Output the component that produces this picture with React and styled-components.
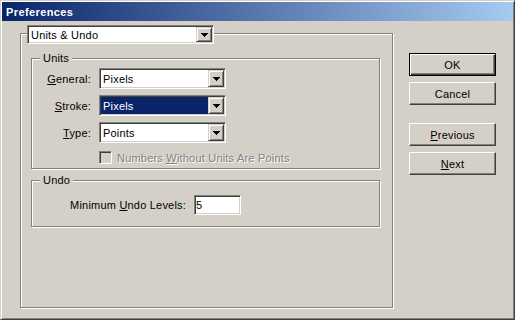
import React from 'react';
import styled, { createGlobalStyle } from 'styled-components';

const Global = createGlobalStyle`
  html, body { margin: 0; padding: 0; background: #d4d0c8; }
  body { font-family: "Liberation Sans", Arial, sans-serif; font-size: 11px; }
`;

const FONT = '"Liberation Sans", Arial, sans-serif';

const Window = styled.div`
  width: 515px;
  height: 320px;
  box-sizing: border-box;
  background: #d4d0c8;
  border: 1px solid;
  border-color: #d4d0c8 #404040 #404040 #d4d0c8;
  box-shadow: inset 1px 1px 0 #fff, inset -1px -1px 0 #808080;
  padding: 1px;
  display: flex;
  flex-direction: column;
  font-family: ${FONT};
  font-size: 11px;
  letter-spacing: 0.2px;
  color: #000;
`;

const TitleBar = styled.div`
  height: 19px;
  flex: none;
  display: flex;
  align-items: center;
  padding-left: 4px;
  background: linear-gradient(to right, #0a246a, #a6caf0);
  color: #fff;
  font-weight: bold;
  letter-spacing: 0.4px;
`;

const Body = styled.div`
  flex: 1;
  display: flex;
  align-items: flex-start;
  gap: 16px;
  padding: 12px 0 0 18px;
`;

const Etched = styled.div`
  box-sizing: border-box;
  border: 1px solid #808080;
  box-shadow: inset 1px 1px 0 #fff, 1px 1px 0 #fff;
  display: flex;
  flex-direction: column;
  align-items: flex-start;
`;

const OuterGroup = styled(Etched)`
  width: 373px;
  height: 275px;
`;

const SubGroup = styled(Etched)`
  width: 349px;
  margin: ${p => p.$top}px 0 0 10px;
  padding-bottom: ${p => p.$bottom}px;
`;

const Legend = styled.div`
  margin: -7px 0 0 8px;
  padding: 0 3px;
  height: 13px;
  line-height: 13px;
  background: #d4d0c8;
  white-space: nowrap;
`;

const Field = styled.div`
  box-sizing: border-box;
  flex: none;
  width: ${p => p.$w}px;
  height: ${p => p.$h}px;
  margin: ${p => p.$margin || '0'};
  border: 1px solid;
  border-color: #808080 #fff #fff #808080;
  box-shadow: inset 1px 1px 0 #404040, inset -1px -1px 0 #d4d0c8;
  background: #fff;
  padding: 1px;
  display: flex;
  position: relative;
`;

const FieldText = styled.div`
  flex: 1;
  display: flex;
  align-items: center;
  padding-left: ${p => p.$pad ?? 2}px;
  background: ${p => (p.$selected ? '#0a246a' : 'transparent')};
  color: ${p => (p.$selected ? '#fff' : '#000')};
  white-space: nowrap;
  overflow: hidden;
`;

const DropButton = styled.div`
  box-sizing: border-box;
  width: 16px;
  flex: none;
  background: #d4d0c8;
  border: 1px solid;
  border-color: #d4d0c8 #404040 #404040 #d4d0c8;
  box-shadow: inset 1px 1px 0 #fff, inset -1px -1px 0 #808080;
  display: flex;
  align-items: center;
  justify-content: center;
  padding-top: 1px;
`;

const Arrow = () => (
  <svg width="7" height="4" viewBox="0 0 7 4" shapeRendering="crispEdges">
    <path d="M0 0h7v1H0zM1 1h5v1H1zM2 2h3v1H2zM3 3h1v1H3z" fill="#000" />
  </svg>
);

const Select = ({ value, w, h, selected, margin }) => (
  <Field $w={w} $h={h} $margin={margin}>
    <FieldText $selected={selected}>{value}</FieldText>
    <DropButton>
      <Arrow />
    </DropButton>
  </Field>
);

const FormGrid = styled.div`
  display: grid;
  grid-template-columns: ${p => p.$cols};
  column-gap: 8px;
  row-gap: 6px;
  align-items: center;
  margin-top: ${p => p.$top}px;
`;

const Label = styled.div`
  text-align: right;
  white-space: nowrap;
`;

const CheckRow = styled.div`
  display: flex;
  align-items: center;
  gap: 5px;
  margin: 8px 0 0 67px;
  height: 13px;
`;

const CheckBox = styled.div`
  box-sizing: border-box;
  width: 13px;
  height: 13px;
  border: 1px solid;
  border-color: #808080 #fff #fff #808080;
  box-shadow: inset 1px 1px 0 #404040, inset -1px -1px 0 #d4d0c8;
  background: #d4d0c8;
`;

const DisabledText = styled.span`
  color: #808080;
  text-shadow: 1px 1px 0 #fff;
  white-space: nowrap;
`;

const ButtonColumn = styled.div`
  display: flex;
  flex-direction: column;
  gap: 18px;
  margin-top: 20px;
`;

const ButtonGroup = styled.div`
  display: flex;
  flex-direction: column;
  gap: 6px;
`;

const Button = styled.div`
  box-sizing: border-box;
  width: 87px;
  height: 23px;
  display: flex;
  align-items: center;
  justify-content: center;
  background: #d4d0c8;
  border: 1px solid;
  border-color: ${p => (p.$default ? '#000' : '#fff #404040 #404040 #fff')};
  box-shadow: ${p =>
    p.$default
      ? 'inset 1px 1px 0 #fff, inset -1px -1px 0 #404040, inset -2px -2px 0 #808080'
      : 'inset -1px -1px 0 #808080'};
`;

export default function App() {
  return (
    <>
      <Global />
      <Window>
        <TitleBar>Preferences</TitleBar>
        <Body>
          <OuterGroup>
            <Select value="Units & Undo" w={187} h={19} margin="-9px 0 0 6px" />
            <SubGroup $top={14} $bottom={4}>
              <Legend>Units</Legend>
              <FormGrid $cols="59px 127px" $top={3}>
                <Label><u>G</u>eneral:</Label>
                <Select value="Pixels" w={127} h={21} />
                <Label><u>S</u>troke:</Label>
                <Select value="Pixels" w={127} h={21} selected />
                <Label><u>T</u>ype:</Label>
                <Select value="Points" w={127} h={21} />
              </FormGrid>
              <CheckRow>
                <CheckBox />
                <DisabledText>
                  Numbers <u>W</u>ithout Units Are Points
                </DisabledText>
              </CheckRow>
            </SubGroup>
            <SubGroup $top={11} $bottom={11}>
              <Legend>Undo</Legend>
              <FormGrid $cols="154px 47px" $top={8}>
                <Label>Minimum <u>U</u>ndo Levels:</Label>
                <Field $w={47} $h={20}>
                  <FieldText $pad={0}>5</FieldText>
                </Field>
              </FormGrid>
            </SubGroup>
          </OuterGroup>
          <ButtonColumn>
            <ButtonGroup>
              <Button $default>OK</Button>
              <Button>Cancel</Button>
            </ButtonGroup>
            <ButtonGroup>
              <Button><span><u>P</u>revious</span></Button>
              <Button><span><u>N</u>ext</span></Button>
            </ButtonGroup>
          </ButtonColumn>
        </Body>
      </Window>
    </>
  );
}
